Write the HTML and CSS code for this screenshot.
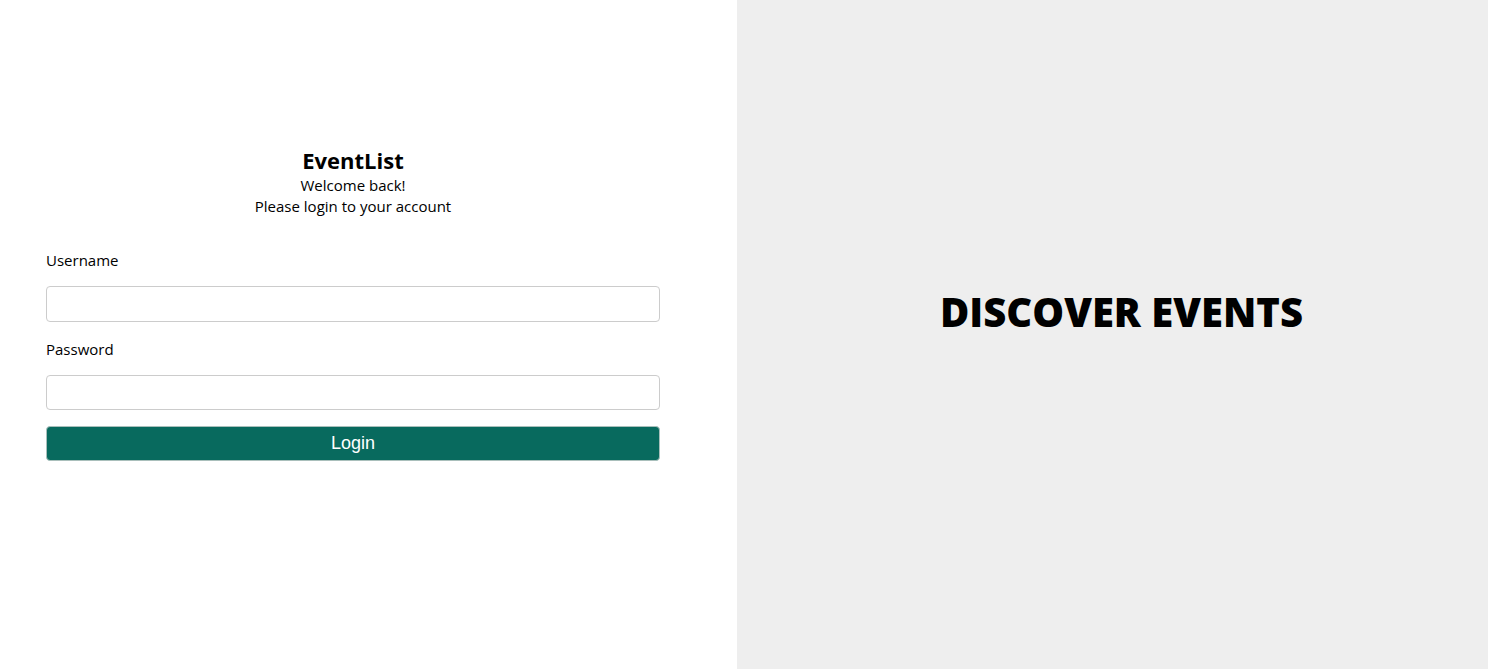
FILE: index.html
```html
<!DOCTYPE html>
<html lang="en">
<head>
<meta charset="utf-8">
<title>EventList - Login</title>
<link rel="stylesheet" href="styles.css">
</head>
<body>
<div class="page">
  <section class="left">
    <div class="form-wrap">
      <header class="brand">
        <h2 class="title">EventList</h2>
        <p class="sub">Welcome back!</p>
        <p class="sub">Please login to your account</p>
      </header>
      <form class="form">
        <label class="label" for="username">Username</label>
        <input class="input" id="username" type="text">
        <label class="label" for="password">Password</label>
        <input class="input input-pw" id="password" type="password">
        <button class="btn" type="button">Login</button>
      </form>
    </div>
  </section>
  <section class="right">
    <h1 class="hero">DISCOVER EVENTS</h1>
  </section>
</div>
</body>
</html>
```

FILE: styles.css
```css
* { box-sizing: border-box; }
html, body { margin: 0; padding: 0; }
body {
  font-family: "Open Sans", "Noto Sans", sans-serif;
  color: #000;
  background: #fff;
}
.page {
  display: flex;
  height: 669px;
}
.left {
  width: 737px;
  background: #fff;
  padding: 145px 77px 0 46px;
}
.form-wrap {
  width: 614px;
}
.brand {
  text-align: center;
}
.title {
  margin: 0;
  font-size: 22px;
  line-height: 30px;
  font-weight: 700;
}
.sub {
  margin: 0;
  font-size: 15px;
  line-height: 21px;
}
.form {
  display: flex;
  flex-direction: column;
  margin-top: 33px;
}
.label {
  font-size: 15px;
  line-height: 20px;
  margin-bottom: 16px;
}
.input {
  height: 36px;
  border: 1px solid #ccc;
  border-radius: 4px;
  margin-bottom: 17px;
  font-size: 15px;
  padding: 0 10px;
}
.input-pw {
  height: 35px;
  margin-bottom: 16px;
}
.btn {
  height: 35px;
  border: 1px solid #a9bfbb;
  border-radius: 4px;
  background: #086a5e;
  color: #fff;
  font-family: "Liberation Sans", Arial, sans-serif;
  font-size: 18px;
}
.right {
  flex: 1;
  background: #eeeeee;
  display: flex;
  align-items: center;
  justify-content: center;
  padding: 0 0 46px 18px;
}
.hero {
  margin: 0;
  font-size: 40px;
  font-weight: 800;
}
```
